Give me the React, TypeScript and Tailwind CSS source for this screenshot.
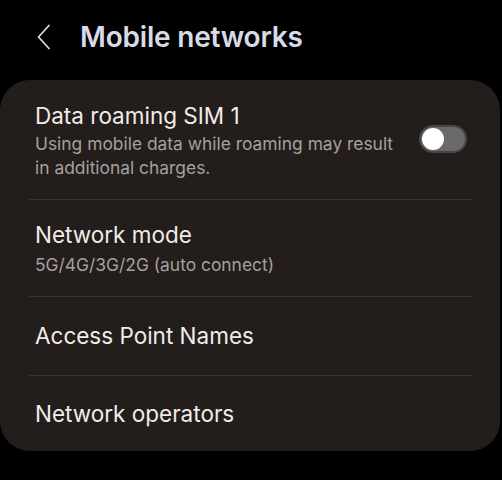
import React, { useState } from 'react';

const font = { fontFamily: 'Inter, Roboto, "Noto Sans", sans-serif' };

function Divider() {
  return <div className="ml-[29px] mr-[27px] h-px bg-[#3b3535]" />;
}

function Toggle({ on, onChange }: { on: boolean; onChange: () => void }) {
  return (
    <button
      onClick={onChange}
      className="relative mb-[4px] h-[28px] w-[48px] shrink-0 rounded-full border-2 border-[#4a4646] bg-[#6a6868]"
    >
      <span
        className={`absolute top-[1px] h-[22px] w-[22px] rounded-full bg-white ${on ? 'left-[21px]' : 'left-[1px]'}`}
      />
    </button>
  );
}

export default function App() {
  const [roaming, setRoaming] = useState(false);

  return (
    <div className="min-h-screen w-[502px] bg-black" style={font}>
      <header className="flex h-[80px] items-center pb-[6px]">
        <svg className="ml-[36px] h-[26px] w-[16px]" viewBox="0 0 16 26" fill="none">
          <path d="M13 1.5 L2.5 13 L13 24.5" stroke="#d6d8e0" strokeWidth="1.8" strokeLinecap="round" strokeLinejoin="round" />
        </svg>
        <h1 className="ml-[28px] text-[28px] font-semibold leading-none tracking-[-0.2px] text-[#d7dbe7]">Mobile networks</h1>
      </header>

      <main className="mr-[2px] rounded-[30px] bg-[#231d1c]">
        <div className="flex items-center pt-[21px] pb-[19px] pl-[35px] pr-[33px]">
          <div className="flex-1">
            <div className="text-[22.5px] leading-[30px] text-[#f1ece9]">Data roaming SIM 1</div>
            <div className="mt-[1px] w-[366px] text-[17.4px] leading-[24px] text-[#a6a09d]">
              Using mobile data while roaming may result in additional charges.
            </div>
          </div>
          <Toggle on={roaming} onChange={() => setRoaming(!roaming)} />
        </div>
        <Divider />
        <div className="pt-[20px] pb-[19px] pl-[35px]">
          <div className="text-[22.5px] leading-[30px] text-[#f1ece9]">Network mode</div>
          <div className="mt-[3px] text-[17.4px] leading-[24px] text-[#a6a09d]">5G/4G/3G/2G (auto connect)</div>
        </div>
        <Divider />
        <div className="flex h-[78px] items-center pl-[35px]">
          <div className="text-[22.5px] leading-[30px] text-[#f1ece9]">Access Point Names</div>
        </div>
        <Divider />
        <div className="flex h-[75px] items-center pt-[1px] pl-[35px]">
          <div className="text-[22.5px] leading-[30px] text-[#f1ece9]">Network operators</div>
        </div>
      </main>
    </div>
  );
}
